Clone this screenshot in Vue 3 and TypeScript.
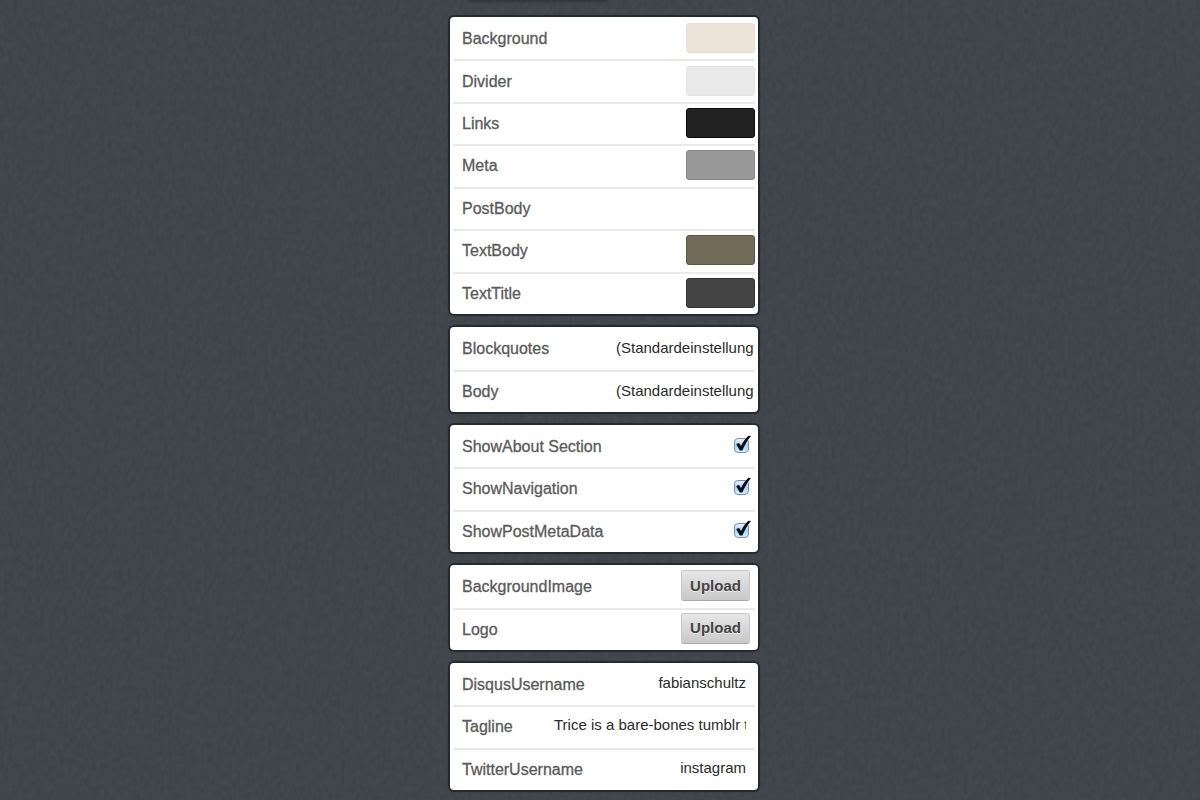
<script setup lang="ts">
import { ref } from 'vue'

interface ColorRow { name: string; value: string; edge: string }

const colors = ref<ColorRow[]>([
  { name: 'Background', value: '#eee3d9', edge: '#e9ddd1' },
  { name: 'Divider', value: '#e9e9e9', edge: '#e4e4e4' },
  { name: 'Links', value: '#222222', edge: '#0b0b0b' },
  { name: 'Meta', value: '#999999', edge: '#858585' },
  { name: 'PostBody', value: '#ffffff', edge: '#ffffff' },
  { name: 'TextBody', value: '#736b5a', edge: '#5e5543' },
  { name: 'TextTitle', value: '#444444', edge: '#303030' },
])

const fonts = ref([
  { name: 'Blockquotes', value: '(Standardeinstellung' },
  { name: 'Body', value: '(Standardeinstellung' },
])

const toggles = ref([
  { name: 'ShowAbout Section', value: true },
  { name: 'ShowNavigation', value: true },
  { name: 'ShowPostMetaData', value: true },
])

const uploads = ['BackgroundImage', 'Logo']

const texts = ref([
  { name: 'DisqusUsername', value: 'fabianschultz', size: 'short' },
  { name: 'Tagline', value: 'Trice is a bare-bones tumblr theme', size: 'long' },
  { name: 'TwitterUsername', value: 'instagram', size: 'short' },
])
</script>

<template>
  <div class="page">
    <svg class="grain" aria-hidden="true">
      <filter id="paper" x="0" y="0" width="100%" height="100%" color-interpolation-filters="sRGB">
        <feTurbulence type="fractalNoise" baseFrequency="0.22 0.14" numOctaves="3" seed="4" />
        <feColorMatrix values="0 0 0 0 0.1  0 0 0 0 0.12  0 0 0 0 0.13  0.22 0 0 0 -0.06" />
      </filter>
      <rect width="100%" height="100%" filter="url(#paper)" />
    </svg>

    <main class="panel">
      <section class="card seven">
        <div v-for="c in colors" :key="c.name" class="row">
          <label :for="c.name">{{ c.name }}</label>
          <button
            :id="c.name"
            type="button"
            class="swatch"
            :style="{ backgroundColor: c.value, borderColor: c.edge }"
          ></button>
        </div>
      </section>

      <section class="card two">
        <div v-for="f in fonts" :key="f.name" class="row">
          <label :for="f.name">{{ f.name }}</label>
          <select :id="f.name" v-model="f.value" class="font">
            <option>(Standardeinstellung</option>
          </select>
        </div>
      </section>

      <section class="card three">
        <div v-for="(t, i) in toggles" :key="t.name" class="row">
          <label :for="'toggle' + i">{{ t.name }}</label>
          <span class="check">
            <input :id="'toggle' + i" v-model="t.value" type="checkbox" />
            <svg v-if="t.value" viewBox="0 0 20 20" aria-hidden="true">
              <path d="M4.2 9 L7 8 L9 11 C11 7 13.4 3.4 16.4 0.8 L19 1 C15.4 5.4 12.8 10 10.4 15.4 L7.8 15.4 Z" />
            </svg>
          </span>
        </div>
      </section>

      <section class="card two">
        <div v-for="u in uploads" :key="u" class="row">
          <label :for="u">{{ u }}</label>
          <button :id="u" type="button" class="upload">Upload</button>
        </div>
      </section>

      <section class="card three">
        <div v-for="t in texts" :key="t.name" class="row">
          <label :for="t.name">{{ t.name }}</label>
          <input :id="t.name" v-model="t.value" type="text" class="text" :class="t.size" />
        </div>
      </section>
    </main>
  </div>
</template>

<style>
body {
  margin: 0;
  background: #43484e;
}
</style>

<style scoped>
.page {
  position: relative;
  min-height: 100vh;
  box-sizing: border-box;
  padding: 17px 0 10px 8px;
  overflow: hidden;
  font-family: "Liberation Sans", Arial, sans-serif;
}
.grain {
  position: absolute;
  inset: 0;
  width: 100%;
  height: 100%;
}
.panel {
  position: relative;
  display: flex;
  flex-direction: column;
  gap: 13px;
  max-width: 308px;
  margin: 0 auto;
}
/* soft shade above the first card */
.panel::before {
  content: "";
  position: absolute;
  top: -19px;
  left: 18px;
  width: 140px;
  height: 4px;
  background: #24282c;
  filter: blur(1px);
  opacity: 0.5;
}
.card {
  display: grid;
  grid-auto-rows: 1fr;
  background: #fff;
  border-radius: 4px;
  box-shadow: 0 0 1px 2px #24292f;
}
.seven { min-height: 297px; }
.three { min-height: 127px; }
.two { min-height: 85px; }
.row {
  display: flex;
  align-items: center;
  justify-content: space-between;
  margin: 0 3px;
  padding-left: 9px;
}
.row + .row {
  background: linear-gradient(#e9e9e9, #e9e9e9) top / 100% 2px no-repeat;
}
label {
  padding-top: 2px;
  font-size: 16px;
  line-height: 20px;
  color: #5a5a5a;
  -webkit-text-stroke: 0.3px #5a5a5a;
  white-space: nowrap;
}
.swatch {
  width: 69px;
  height: 30px;
  padding: 0;
  border: 1px solid;
  border-radius: 3px;
}
.font,
.text {
  appearance: none;
  box-sizing: border-box;
  height: 24px;
  padding: 0;
  border: 0;
  border-radius: 0;
  outline: 0;
  background: transparent;
  color: #2a2a2a;
  font: 15px/20px "Liberation Sans", Arial, sans-serif;
}
.font {
  width: 139px;
  text-overflow: clip;
}
.text {
  margin: 0 9px 3px 0;
}
.short {
  width: 110px;
  text-align: right;
}
.long {
  width: 192px;
}
.check {
  display: grid;
  width: 20px;
  height: 20px;
  margin: 0 3px 2px 0;
}
.check > * {
  grid-area: 1 / 1;
}
.check input {
  appearance: none;
  width: 15px;
  height: 15px;
  margin: 3px 0 0 2px;
  border: 1px solid #8189bd;
  border-radius: 4px;
  background: linear-gradient(#e8f3ff, #a8d2f5 50%, #c8f6ff);
}
.check svg {
  width: 20px;
  height: 20px;
  fill: #080c18;
  pointer-events: none;
}
.upload {
  width: 69px;
  height: 31px;
  margin: 0 5px 1px 0;
  padding: 0;
  border: 1px solid #c8c8c8;
  border-bottom-color: #a8a8a8;
  border-radius: 3px;
  background: linear-gradient(#e6e6e6, #c9c9c9);
  color: #444;
  font: bold 15px/20px "Liberation Sans", Arial, sans-serif;
  text-shadow: 0 1px 0 #eee;
}
</style>
